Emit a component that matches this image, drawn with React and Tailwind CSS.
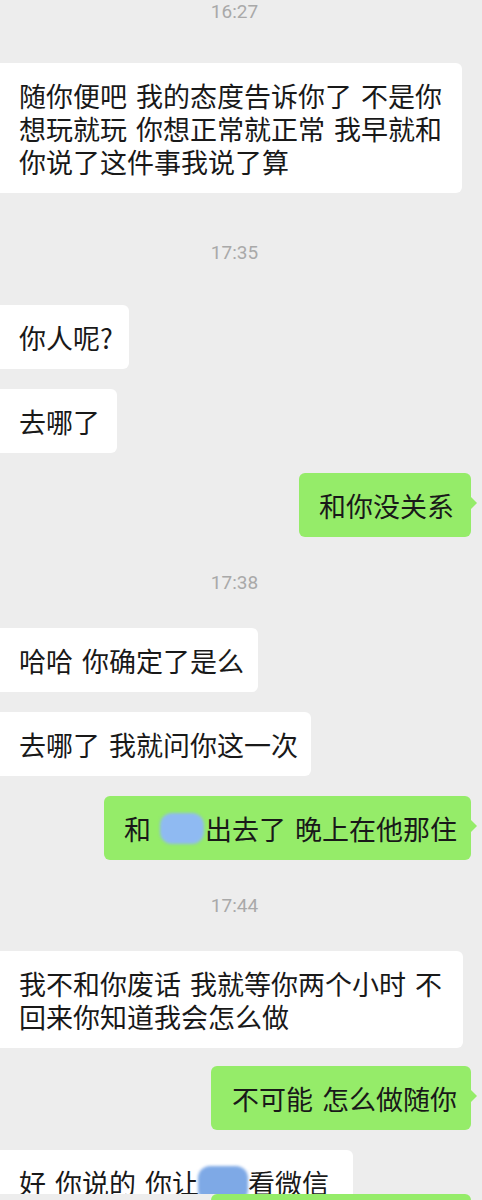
import React from "react";

const FONT = { fontFamily: '"Noto Sans CJK SC", "Noto Sans", sans-serif' };

function Time({ t, className = "" }) {
  return (
    <div className={"w-[469px] h-[24px] text-center text-[19px] leading-[24px] text-[#a9a9a9] " + className} style={{ fontFamily: '"Roboto", "Liberation Sans", sans-serif' }}>
      {t}
    </div>
  );
}

const TXT = "text-[27px] leading-[33px] text-[#191919] whitespace-nowrap [word-spacing:3px]";

function Left({ w, className = "", children }) {
  return (
    <div className={"flex " + className}>
      <div className={"bg-white rounded-r-[6px] pl-[19px] pr-[12px] py-[15.5px] " + TXT + " " + w}>
        {children}
      </div>
    </div>
  );
}

function Right({ w, className = "", children }) {
  return (
    <div className={"flex justify-end pr-[11px] " + className}>
      <div className={"relative bg-[#95ec69] rounded-[6px] pl-[20px] pr-[12px] py-[15.5px] " + TXT + " " + w}>
        {children}
        <div className="absolute left-full top-[24px] w-0 h-0 border-y-[6px] border-y-transparent border-l-[6px] border-l-[#95ec69]" />
      </div>
    </div>
  );
}

export default function App() {
  return (
    <div className="w-[482px] h-[1200px] overflow-hidden bg-[#ededed]" style={FONT}>
      <Time t="16:27" />
      <Left w="w-[462px]" className="mt-[39px]">
        随你便吧 我的态度告诉你了 不是你
        <br />
        想玩就玩 你想正常就正常 我早就和
        <br />
        你说了这件事我说了算
      </Left>

      <Time t="17:35" className="mt-[48px]" />
      <Left w="w-[129px]" className="mt-[40px]">你人呢?</Left>
      <Left w="w-[117px]" className="mt-[20px]">去哪了</Left>
      <Right w="w-[172px]" className="mt-[20px]">和你没关系</Right>

      <Time t="17:38" className="mt-[34px]" />
      <Left w="w-[258px]" className="mt-[33px]">哈哈 你确定了是么</Left>
      <Left w="w-[311px]" className="mt-[20px]">去哪了 我就问你这一次</Left>
      <Right w="w-[367px]" className="mt-[20px]">
        和
        <span className="relative inline-block w-[54px] text-transparent [word-spacing:0px]">
          某某
          <span className="absolute left-[9px] top-[1px] w-[44px] h-[31px] rounded-[12px] bg-[#8fbaf2] blur-[1.5px]" />
        </span>
        出去了 晚上在他那住
      </Right>

      <Time t="17:44" className="mt-[34px]" />
      <Left w="w-[463px]" className="mt-[33px]">
        我不和你废话 我就等你两个小时 不
        <br />
        回来你知道我会怎么做
      </Left>
      <Right w="w-[260px]" className="mt-[18px]">
        <span className="pl-[1px]">不可能 怎么做随你</span>
      </Right>

      <div className="flex mt-[20px] h-[44px] overflow-hidden">
        <div className={"bg-white rounded-tr-[6px] pl-[19px] pr-[12px] pt-[15.5px] h-[60px] w-[353px] " + TXT}>
          好 你说的 你让
          <span className="relative inline-block w-[49px] text-transparent [word-spacing:0px]">
            某
            <span className="absolute left-[-1px] top-[0px] w-[50px] h-[36px] rounded-[12px] bg-[#7ea9e6] blur-[1.5px]" />
          </span>
          看微信
        </div>
      </div>
      <div className="flex justify-end pr-[11px]">
        <div className="bg-[#95ec69] rounded-t-[6px] w-[260px] h-[40px]" />
      </div>
    </div>
  );
}
